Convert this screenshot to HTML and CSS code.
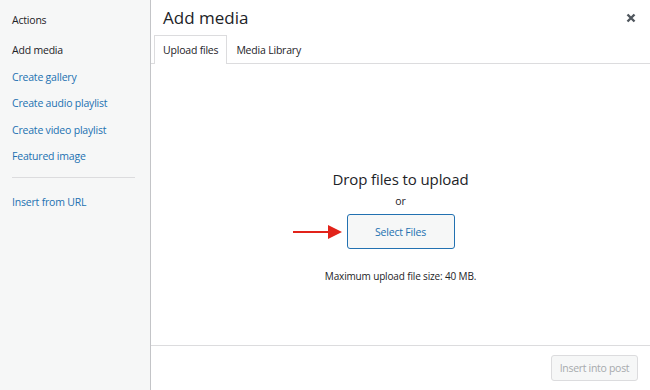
FILE: index.html
```html
<!DOCTYPE html>
<html lang="en">
<head>
    <meta charset="UTF-8">
    <title>Add media</title>
    <link rel="stylesheet" href="styles.css">
</head>
<body>
    <div class="media-modal">
        <aside class="menu">
            <div class="menu-title">Actions</div>
            <a class="menu-item active">Add media</a>
            <a class="menu-item">Create gallery</a>
            <a class="menu-item">Create audio playlist</a>
            <a class="menu-item">Create video playlist</a>
            <a class="menu-item">Featured image</a>
            <div class="separator"></div>
            <a class="menu-item">Insert from URL</a>
        </aside>

        <div class="frame">
            <header class="frame-title">
                <h1>Add media</h1>
                <button class="close" aria-label="Close">
                    <svg width="10" height="10" viewBox="0 0 10 10">
                        <path d="M1.5 1.5 L8.5 8.5 M8.5 1.5 L1.5 8.5" stroke="#50575e" stroke-width="2.4"/>
                    </svg>
                </button>
            </header>
            <nav class="tabs">
                <a class="tab active">Upload files</a>
                <a class="tab">Media Library</a>
            </nav>

            <div class="uploader">
                <h2>Drop files to upload</h2>
                <p class="or">or</p>
                <div class="select-row">
                    <svg class="arrow" width="50" height="14" viewBox="0 0 50 14">
                        <line x1="0" y1="7" x2="37" y2="7" stroke="#e2231a" stroke-width="2"/>
                        <polygon points="35,0 49,7 35,14" fill="#e2231a"/>
                    </svg>
                    <button class="select-files">Select Files</button>
                </div>
                <p class="max-size">Maximum upload file size: 40 MB.</p>
            </div>

            <footer class="toolbar">
                <button class="insert" disabled>Insert into post</button>
            </footer>
        </div>
    </div>
</body>
</html>
```

FILE: styles.css
```css
body {
    margin: 0;
    padding: 0;
    font-family: "Open Sans", "Noto Sans", sans-serif;
    background: white;
    color: #1d2327;
}

.media-modal {
    display: flex;
    width: 650px;
    height: 390px;
    overflow: hidden;
}

.menu {
    width: 151px;
    flex-shrink: 0;
    background: #f6f7f7;
    border-right: 1px solid #c3c4c7;
    padding-top: 11px;
    box-sizing: border-box;
}

.menu-title,
.menu-item {
    display: block;
    padding: 0 12px;
    font-size: 10.5px;
    letter-spacing: -0.2px;
    line-height: 18px;
    height: 26.5px;
    color: #2271b1;
}

.menu-title {
    color: #1d2327;
    height: 30px;
}

.menu-item.active {
    color: #1d2327;
}

.separator {
    height: 1px;
    background: #dcdcde;
    margin: 3px 15px 15px 12px;
}

.frame {
    flex: 1;
    display: flex;
    flex-direction: column;
}

.frame-title {
    display: flex;
    justify-content: space-between;
    align-items: center;
    height: 35px;
    padding: 0 14px 0 12px;
}

h1 {
    margin: 0;
    font-size: 17px;
    font-weight: 400;
}

.close {
    border: none;
    background: none;
    padding: 0;
    line-height: 0;
    cursor: pointer;
}

.tabs {
    display: flex;
    height: 28px;
    padding-left: 3px;
    border-bottom: 1px solid #dcdcde;
}

.tab {
    display: flex;
    align-items: center;
    padding: 0 8px;
    font-size: 10.5px;
    letter-spacing: -0.2px;
    color: #1d2327;
    border: 1px solid transparent;
    border-bottom: none;
    margin-bottom: -1px;
}

.tab.active {
    background: white;
    border-color: #dcdcde;
}

.uploader {
    flex: 1;
    display: flex;
    flex-direction: column;
    align-items: center;
    padding-top: 104px;
}

h2 {
    margin: 0;
    font-size: 15px;
    letter-spacing: -0.1px;
    font-weight: 400;
    line-height: 22px;
}

.or {
    margin: 0;
    font-size: 10.5px;
    line-height: 20px;
    margin-top: 1px;
}

.select-row {
    position: relative;
    margin-top: 3px;
}

.arrow {
    position: absolute;
    left: -54px;
    top: 11px;
}

.select-files {
    width: 108px;
    height: 35px;
    background: #f6f7f7;
    border: 1px solid #2271b1;
    border-radius: 3px;
    color: #2271b1;
    font-family: inherit;
    font-size: 10.5px;
    letter-spacing: -0.2px;
}

.max-size {
    margin: 0;
    margin-top: 20px;
    font-size: 10px;
    letter-spacing: -0.15px;
    color: #1d2327;
}

.toolbar {
    height: 44px;
    border-top: 1px solid #dcdcde;
    display: flex;
    justify-content: flex-end;
    align-items: center;
    padding-right: 12px;
}

.insert {
    height: 26px;
    width: 87px;
    padding: 0;
    background: #f6f7f7;
    border: 1px solid #dcdcde;
    border-radius: 3px;
    color: #a7aaad;
    font-family: inherit;
    font-size: 10.5px;
    letter-spacing: -0.3px;
}
```
